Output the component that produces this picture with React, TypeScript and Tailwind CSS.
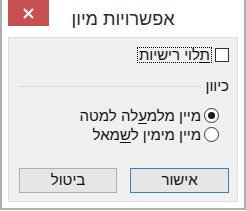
export default function App() {
  const font = { fontFamily: '"Liberation Sans", Arial, sans-serif' };
  return (
    <div className="w-[246px] h-[211px] bg-white" style={font}>
      <div className="flex flex-col w-[246px] h-[210px] border-l-2 border-r-2 border-b-2 border-[#b0b0b0] bg-white">
        {/* title bar */}
        <div className="relative flex h-[37px] items-start">
          <div className="ml-[6px] flex h-[26px] w-[41px] items-center justify-center bg-[#c75050]">
            <svg width="11" height="11" viewBox="0 0 11 11">
              <path d="M1 1 L10 10 M10 1 L1 10" stroke="white" strokeWidth="2" />
            </svg>
          </div>
          <div
            dir="rtl"
            className="absolute left-0 right-0 top-[8px] text-center text-[18px] leading-[22px] text-[#2b2b2b]"
          >
            אפשרויות מיון
          </div>
        </div>

        {/* content panel */}
        <div
          dir="rtl"
          className="mx-[6px] flex h-[165px] w-[230px] flex-col border border-[#dcdcdc] bg-[#f0f0f0] pr-[8px] pl-[9px] text-[15px] text-[#111]"
        >
          <div className="mt-[9px] flex h-[16px] items-center gap-[3px]">
            <div className="h-[14px] w-[14px] shrink-0 border border-[#333] bg-white" />
            <span className="border border-dotted border-black px-[1px] leading-[14px]">
              <u className="underline-offset-2">ת</u>לוי רישיות
            </span>
          </div>

          <div className="mt-[15px] flex h-[16px] items-center gap-[5px]">
            <span className="leading-[16px]">כיוון</span>
            <div className="h-px flex-1 bg-[#dcdcdc]" />
          </div>

          <div className="mt-[12px] flex h-[19px] items-center gap-[3px] pr-[10px]">
            <div className="flex h-[15px] w-[15px] shrink-0 items-center justify-center rounded-full border border-[#333] bg-white">
              <div className="h-[7px] w-[7px] rounded-full bg-[#1a1a1a]" />
            </div>
            <span className="leading-[16px]">
              מיין מלמ<u className="underline-offset-2">ע</u>לה למטה
            </span>
          </div>

          <div className="flex h-[19px] items-center gap-[3px] pr-[10px]">
            <div className="h-[15px] w-[15px] shrink-0 rounded-full border border-[#333] bg-white" />
            <span className="leading-[16px]">
              מיין מימין ל<u className="underline-offset-2">ש</u>מאל
            </span>
          </div>

          <div className="mt-[24px] flex gap-[13px]">
            <button className="flex h-[25px] w-[99px] items-center justify-center border border-[#3c7fb1] bg-[#e6e6e6] text-[15px] text-[#111]">
              אישור
            </button>
            <button className="flex h-[25px] w-[98px] items-center justify-center border border-[#adadad] bg-[#e6e6e6] text-[15px] text-[#111]">
              ביטול
            </button>
          </div>
        </div>
      </div>
    </div>
  );
}
